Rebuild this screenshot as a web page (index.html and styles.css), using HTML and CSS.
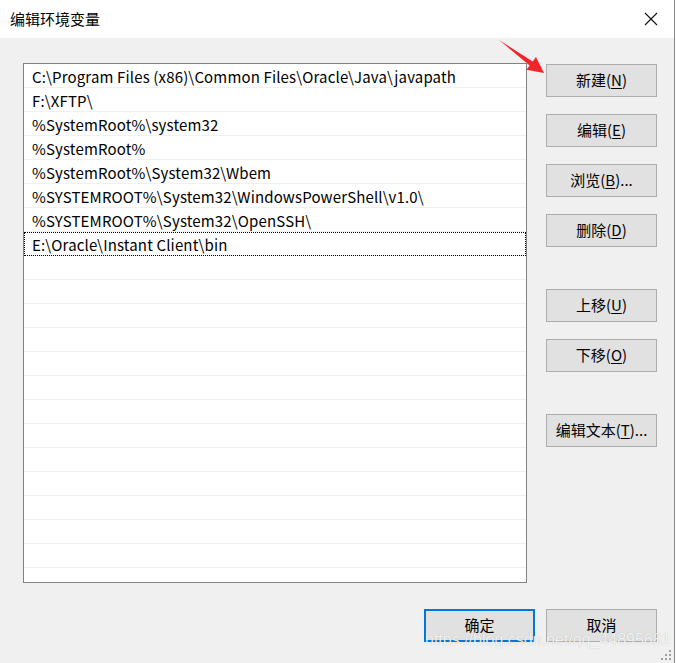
FILE: index.html
```html
<!DOCTYPE html>
<html lang="zh-CN">
<head>
<meta charset="utf-8">
<title>编辑环境变量</title>
<link rel="stylesheet" href="styles.css">
</head>
<body>
<div class="window">
  <div class="titlebar">
    <span class="title">编辑环境变量</span>
    <svg class="close" width="14" height="14" viewBox="0 0 14 14"><path d="M1 1 L13 13 M13 1 L1 13" stroke="#111" stroke-width="1.1" fill="none"/></svg>
  </div>
  <div class="body">
    <div class="main">
      <div class="listbox">
        <div class="row">C:\Program Files (x86)\Common Files\Oracle\Java\javapath</div>
        <div class="row">F:\XFTP\</div>
        <div class="row">%SystemRoot%\system32</div>
        <div class="row">%SystemRoot%</div>
        <div class="row">%SystemRoot%\System32\Wbem</div>
        <div class="row">%SYSTEMROOT%\System32\WindowsPowerShell\v1.0\</div>
        <div class="row">%SYSTEMROOT%\System32\OpenSSH\</div>
        <div class="row focus">E:\Oracle\Instant Client\bin</div>
        <div class="row"></div><div class="row"></div><div class="row"></div><div class="row"></div>
        <div class="row"></div><div class="row"></div><div class="row"></div><div class="row"></div>
        <div class="row"></div><div class="row"></div><div class="row"></div><div class="row"></div>
        <div class="row"></div><div class="row"></div>
      </div>
      <div class="side">
        <div class="group">
          <button class="btn">新建(<u>N</u>)</button>
          <button class="btn">编辑(<u>E</u>)</button>
          <button class="btn">浏览(<u>B</u>)...</button>
          <button class="btn">删除(<u>D</u>)</button>
        </div>
        <div class="group move">
          <button class="btn">上移(<u>U</u>)</button>
          <button class="btn">下移(<u>O</u>)</button>
        </div>
        <div class="group text">
          <button class="btn">编辑文本(<u>T</u>)...</button>
        </div>
      </div>
    </div>
    <div class="footer">
      <button class="btn primary">确定</button>
      <button class="btn">取消</button>
    </div>
  </div>
  <svg class="arrow" width="60" height="45" viewBox="495 36 60 45"><polygon points="499,40 532.7,61.4 536,57 544,73 526.4,69.8 529.7,65.4" fill="#f0262a"/></svg>
  <div class="watermark">https://blog.csdn.net/qq_44895681</div>
  <svg class="grip" width="10" height="10" viewBox="0 0 10 10"><g fill="#a0a0a0"><rect x="8" y="0" width="2" height="2"/><rect x="4" y="4" width="2" height="2"/><rect x="8" y="4" width="2" height="2"/><rect x="0" y="8" width="2" height="2"/><rect x="4" y="8" width="2" height="2"/><rect x="8" y="8" width="2" height="2"/></g></svg>
</div>
</body>
</html>
```
FILE: styles.css
```css
html, body {
  margin: 0;
  padding: 0;
  background: #ffffff;
}
body {
  width: 677px;
  height: 663px;
  overflow: hidden;
  font-family: "Noto Sans CJK SC", "Noto Sans", sans-serif;
  color: #000;
}
.window {
  position: relative;
  width: 674px;
  height: 663px;
  border-right: 1px solid #8a8a8a;
  background: #f0f0f0;
  display: flex;
  flex-direction: column;
}
.titlebar {
  height: 38px;
  background: #ffffff;
  display: flex;
  align-items: center;
  justify-content: space-between;
  padding: 0 16px 0 10px;
  flex: none;
}
.title {
  font-size: 15px;
  line-height: 20px;
}
.close {
  display: block;
}
.body {
  flex: 1;
  display: flex;
  flex-direction: column;
  padding: 25px 0 0 23px;
}
.main {
  display: flex;
  gap: 19px;
}
.listbox {
  width: 502px;
  height: 518px;
  border: 1px solid #828282;
  background: #ffffff;
  overflow: hidden;
}
.row {
  height: 22px;
  padding-top: 1px;
  border-bottom: 1px solid #f0f0f0;
  padding-left: 8px;
  font-size: 15px;
  letter-spacing: 0.15px;
  line-height: 24px;
  white-space: nowrap;
  overflow: hidden;
  box-sizing: content-box;
}
.row.focus {
  outline: 1px dotted #000;
  outline-offset: -1px;
}
.side {
  display: flex;
  flex-direction: column;
  padding-top: 1px;
}
.group {
  display: flex;
  flex-direction: column;
  gap: 17px;
}
.group.move {
  margin-top: 42px;
}
.group.text {
  margin-top: 42px;
}
.btn {
  width: 111px;
  height: 33px;
  box-sizing: border-box;
  border: 1px solid #adadad;
  background: #e1e1e1;
  font-family: "Noto Sans CJK SC", "Noto Sans", sans-serif;
  font-size: 15px;
  line-height: 20px;
  color: #000;
  padding: 0 0 1px 0;
  margin: 0;
}
.btn u {
  text-underline-offset: 2px;
}
.btn.primary {
  border: 2px solid #0078d7;
}
.footer {
  display: flex;
  gap: 11px;
  margin-top: 26px;
  padding-left: 401px;
}
.arrow {
  position: absolute;
  left: 495px;
  top: 36px;
}
.watermark {
  position: absolute;
  left: 425px;
  top: 631px;
  font-family: "Liberation Sans", sans-serif;
  font-size: 16px;
  line-height: 18px;
  color: rgba(255, 255, 255, 0.85);
  text-shadow: 0 0 1px rgba(0, 0, 0, 0.25);
  white-space: nowrap;
}
.grip {
  position: absolute;
  right: 3px;
  bottom: 3px;
}
```
